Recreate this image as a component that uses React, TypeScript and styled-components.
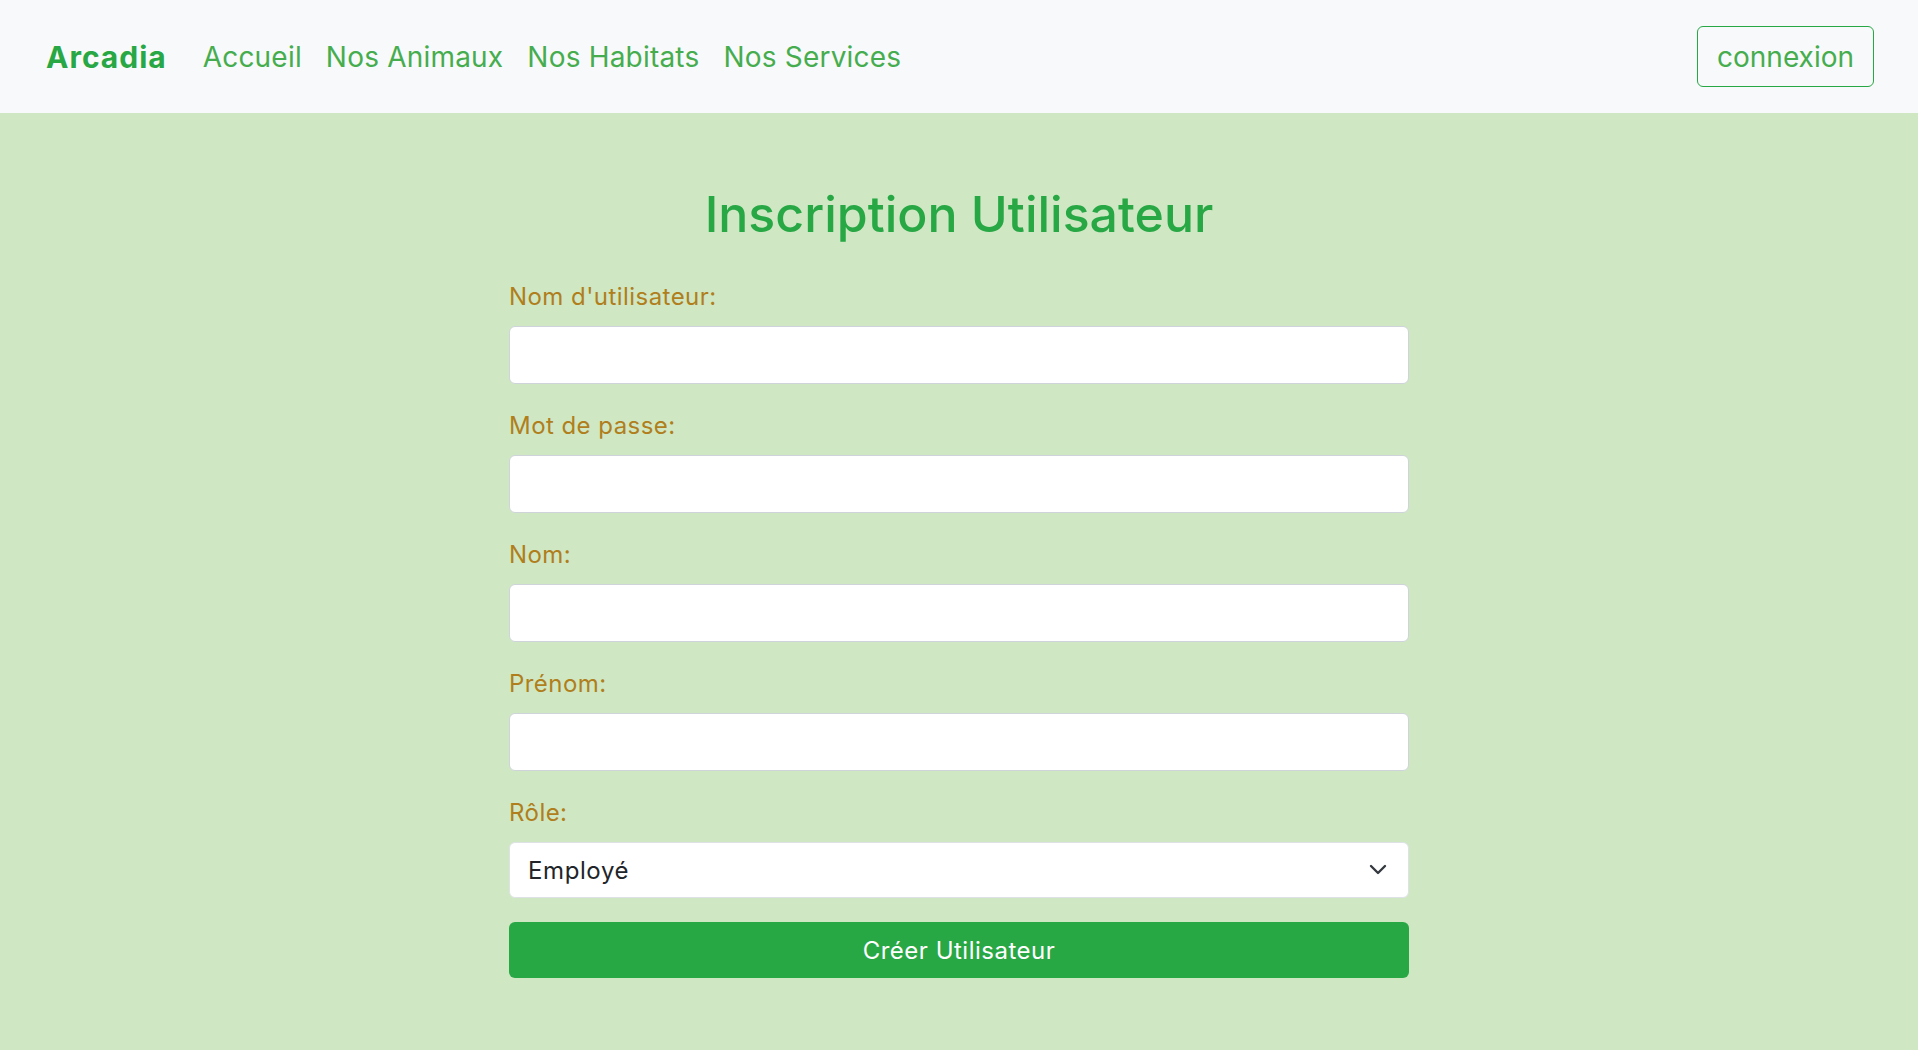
import React, { useState } from "react";
import styled, { createGlobalStyle } from "styled-components";

const GlobalStyle = createGlobalStyle`
	* {
		box-sizing: border-box;
	}
	body {
		margin: 0;
		font-family: Inter, "Open Sans", sans-serif;
		color: #212529;
	}
`;

const Page = styled.div`
	min-height: 100vh;
	display: flex;
	flex-direction: column;
	background-color: #cfe8c3;
`;

const NavBar = styled.nav`
	height: 113px;
	background-color: #f8f9fa;
	display: flex;
	align-items: center;
	padding: 0 44px 0 46px;
`;

const Brand = styled.a`
	font-size: 30px;
	font-weight: 700;
	letter-spacing: 1px;
	color: #28a745;
	text-decoration: none;
	margin-right: 24px;
`;

const NavList = styled.ul`
	display: flex;
	list-style: none;
	margin: 0;
	padding: 0;
	flex: 1;
`;

const NavLink = styled.a`
	display: block;
	padding: 8px 12px;
	font-size: 28px;
	letter-spacing: 0.2px;
	color: #46ad4f;
	text-decoration: none;
`;

const LoginButton = styled.button`
	height: 61px;
	padding: 0 19px;
	font-family: inherit;
	font-size: 28px;
	color: #46ad4f;
	background: transparent;
	border: 1px solid #28a745;
	border-radius: 6px;
	cursor: pointer;
`;

const Main = styled.main`
	flex: 1;
	padding: 71px 0 40px;
`;

const Form = styled.form`
	width: 900px;
	margin: 0 auto;
`;

const Title = styled.h1`
	margin: 0 0 35px;
	font-size: 50px;
	line-height: 60px;
	font-weight: 500;
	color: #28a745;
	text-align: center;
`;

const Group = styled.div`
	margin-bottom: 24px;
`;

const Label = styled.label`
	display: block;
	margin-bottom: 11px;
	font-size: 24px;
	line-height: 36px;
	letter-spacing: 0.45px;
	color: #b07e1c;
`;

const Input = styled.input`
	display: block;
	width: 100%;
	height: 58px;
	padding: 0 16px;
	font-family: inherit;
	font-size: 24px;
	color: #212529;
	background: #fff;
	border: 1px solid #ced4da;
	border-radius: 6px;
	outline: none;
`;

const SelectWrap = styled.div`
	position: relative;
`;

const Select = styled.select`
	display: block;
	width: 100%;
	height: 56px;
	padding: 0 50px 0 18px;
	font-family: inherit;
	font-size: 24px;
	letter-spacing: 0.6px;
	color: #212529;
	background: #fff;
	border: 1px solid #dee2e6;
	border-radius: 6px;
	appearance: none;
	outline: none;
`;

const Chevron = styled.svg`
	position: absolute;
	right: 22px;
	top: 50%;
	transform: translateY(-50%);
	pointer-events: none;
`;

const SubmitButton = styled.button`
	display: block;
	width: 100%;
	height: 56px;
	font-family: inherit;
	font-size: 24px;
	letter-spacing: 0.5px;
	color: #fff;
	background-color: #28a745;
	border: none;
	border-radius: 6px;
	cursor: pointer;
`;

const links = ["Accueil", "Nos Animaux", "Nos Habitats", "Nos Services"];

const fields = [
	{ id: "username", label: "Nom d'utilisateur:", type: "text" },
	{ id: "password", label: "Mot de passe:", type: "password" },
	{ id: "nom", label: "Nom:", type: "text" },
	{ id: "prenom", label: "Prénom:", type: "text" },
];

const App: React.FC = () => {
	const [role, setRole] = useState("employe");

	return (
		<Page>
			<GlobalStyle />
			<NavBar>
				<Brand href="#">Arcadia</Brand>
				<NavList>
					{links.map((link) => (
						<li key={link}>
							<NavLink href="#">{link}</NavLink>
						</li>
					))}
				</NavList>
				<LoginButton type="button">connexion</LoginButton>
			</NavBar>
			<Main>
				<Form onSubmit={(e) => e.preventDefault()}>
					<Title>Inscription Utilisateur</Title>
					{fields.map((field) => (
						<Group key={field.id}>
							<Label htmlFor={field.id}>{field.label}</Label>
							<Input id={field.id} type={field.type} />
						</Group>
					))}
					<Group>
						<Label htmlFor="role">Rôle:</Label>
						<SelectWrap>
							<Select
								id="role"
								value={role}
								onChange={(e) => setRole(e.target.value)}
							>
								<option value="employe">Employé</option>
								<option value="veterinaire">Vétérinaire</option>
							</Select>
							<Chevron width="18" height="12" viewBox="0 0 18 12">
								<path
									d="M2 2l7 7 7-7"
									fill="none"
									stroke="#343a40"
									strokeWidth="2.4"
									strokeLinecap="round"
									strokeLinejoin="round"
								/>
							</Chevron>
						</SelectWrap>
					</Group>
					<SubmitButton type="submit">Créer Utilisateur</SubmitButton>
				</Form>
			</Main>
		</Page>
	);
};

export default App;
